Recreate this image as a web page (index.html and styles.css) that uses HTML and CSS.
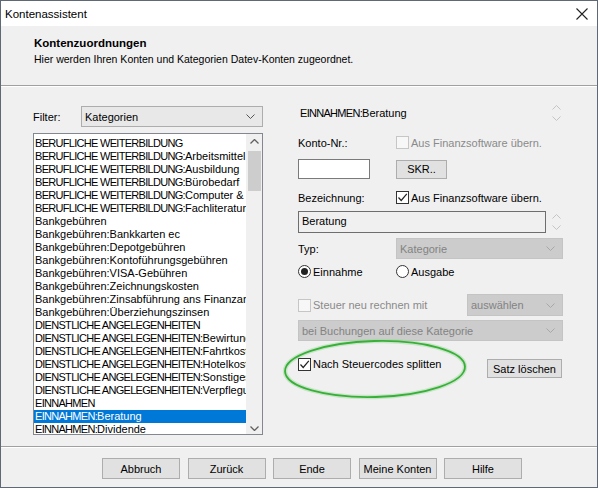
FILE: index.html
```html
<!DOCTYPE html>
<html lang="de">
<head>
<meta charset="utf-8">
<title>Kontenassistent</title>
<link rel="stylesheet" href="styles.css">
</head>
<body>
<div class="window">
  <div class="titlebar">
    <span class="title">Kontenassistent</span>
    <svg class="close" width="12" height="12" viewBox="0 0 12 12"><path d="M0.5 0.5 L11.5 11.5 M11.5 0.5 L0.5 11.5" stroke="#222" stroke-width="1.1" fill="none"/></svg>
  </div>
  <div class="header">
    <div class="h-title">Kontenzuordnungen</div>
    <div class="h-sub">Hier werden Ihren Konten und Kategorien Datev-Konten zugeordnet.</div>
  </div>
  <div class="main">
    <div class="left">
      <div class="filter-row">
        <span class="lbl">Filter:</span>
        <div class="combo filter-combo"><span>Kategorien</span><svg class="chev" width="9" height="5" viewBox="0 0 9 5"><path d="M0.5 0.5 L4.5 4.5 L8.5 0.5" stroke="#555" fill="none"/></svg></div>
      </div>
      <div class="listbox">
        <ul class="items">
          <li><span class="caps">BERUFLICHE WEITERBILDUNG</span></li>
          <li><span class="caps">BERUFLICHE WEITERBILDUNG:</span>Arbeitsmittel</li>
          <li><span class="caps">BERUFLICHE WEITERBILDUNG:</span>Ausbildung</li>
          <li><span class="caps">BERUFLICHE WEITERBILDUNG:</span>Bürobedarf</li>
          <li><span class="caps">BERUFLICHE WEITERBILDUNG:</span>Computer &amp; Software</li>
          <li><span class="caps">BERUFLICHE WEITERBILDUNG:</span>Fachliteratur</li>
          <li>Bankgebühren</li>
          <li>Bankgebühren:Bankkarten ec</li>
          <li>Bankgebühren:Depotgebühren</li>
          <li>Bankgebühren:Kontoführungsgebühren</li>
          <li>Bankgebühren:VISA-Gebühren</li>
          <li>Bankgebühren:Zeichnungskosten</li>
          <li>Bankgebühren:Zinsabführung ans Finanzamt</li>
          <li>Bankgebühren:Überziehungszinsen</li>
          <li><span class="caps">DIENSTLICHE ANGELEGENHEITEN</span></li>
          <li><span class="caps">DIENSTLICHE ANGELEGENHEITEN:</span>Bewirtung</li>
          <li><span class="caps">DIENSTLICHE ANGELEGENHEITEN:</span>Fahrtkosten</li>
          <li><span class="caps">DIENSTLICHE ANGELEGENHEITEN:</span>Hotelkosten</li>
          <li><span class="caps">DIENSTLICHE ANGELEGENHEITEN:</span>Sonstiges</li>
          <li><span class="caps">DIENSTLICHE ANGELEGENHEITEN:</span>Verpflegung</li>
          <li><span class="caps">EINNAHMEN</span></li>
          <li class="sel"><span class="caps">EINNAHMEN:</span>Beratung</li>
          <li><span class="caps">EINNAHMEN:</span>Dividende</li>
        </ul>
        <div class="vscroll">
          <svg class="sarrow" width="9" height="5" viewBox="0 0 9 5"><path d="M0.5 4.5 L4.5 0.5 L8.5 4.5" stroke="#606060" stroke-width="1.3" fill="none"/></svg>
          <div class="thumb"></div>
          <div class="track"></div>
          <svg class="sarrow" width="9" height="5" viewBox="0 0 9 5"><path d="M0.5 0.5 L4.5 4.5 L8.5 0.5" stroke="#606060" stroke-width="1.3" fill="none"/></svg>
        </div>
      </div>
    </div>
    <div class="right">
      <div class="row r-name">
        <span><span class="caps">EINNAHMEN:</span>Beratung</span>
        <svg class="spin" width="9" height="16" viewBox="0 0 9 16"><path d="M0.5 4.5 L4.5 0.5 L8.5 4.5 M0.5 11.5 L4.5 15.5 L8.5 11.5" stroke="#c4c4c4" fill="none"/></svg>
      </div>
      <div class="row r-konto">
        <span class="lbl col1">Konto-Nr.:</span>
        <span class="chk dis"></span><span class="dis-txt">Aus Finanzsoftware übern.</span>
      </div>
      <div class="row r-input">
        <div class="textin"></div>
        <div class="btn skr">SKR..</div>
      </div>
      <div class="row r-bez">
        <span class="lbl col1">Bezeichnung:</span>
        <span class="chk on"><svg width="11" height="11" viewBox="0 0 11 11"><path d="M1.5 5.5 L4.2 8.5 L9.8 1.8" stroke="#222" stroke-width="1.2" fill="none"/></svg></span><span>Aus Finanzsoftware übern.</span>
      </div>
      <div class="row r-text">
        <div class="textbox">Beratung</div>
        <svg class="spin" width="9" height="16" viewBox="0 0 9 16"><path d="M0.5 4.5 L4.5 0.5 L8.5 4.5 M0.5 11.5 L4.5 15.5 L8.5 11.5" stroke="#c4c4c4" fill="none"/></svg>
      </div>
      <div class="row r-typ">
        <span class="lbl col1">Typ:</span>
        <div class="combo dis typ-combo"><span>Kategorie</span><svg class="chev" width="9" height="5" viewBox="0 0 9 5"><path d="M0.5 0.5 L4.5 4.5 L8.5 0.5" stroke="#a8a8a8" fill="none"/></svg></div>
      </div>
      <div class="row r-radio">
        <span class="radio-wrap col1"><span class="radio on"></span><span>Einnahme</span></span>
        <span class="radio-wrap"><span class="radio"></span><span>Ausgabe</span></span>
      </div>
      <div class="row r-steuer">
        <span class="chk dis"></span><span class="dis-txt steuer-lbl">Steuer neu rechnen mit</span>
        <div class="combo dis ausw-combo"><span>auswählen</span><svg class="chev" width="9" height="5" viewBox="0 0 9 5"><path d="M0.5 0.5 L4.5 4.5 L8.5 0.5" stroke="#a8a8a8" fill="none"/></svg></div>
      </div>
      <div class="row r-buch">
        <div class="combo dis buch-combo"><span>bei Buchungen auf diese Kategorie</span><svg class="chev" width="9" height="5" viewBox="0 0 9 5"><path d="M0.5 0.5 L4.5 4.5 L8.5 0.5" stroke="#a8a8a8" fill="none"/></svg></div>
      </div>
      <div class="row r-split">
        <span class="chk on"><svg width="11" height="11" viewBox="0 0 11 11"><path d="M1.5 5.5 L4.2 8.5 L9.8 1.8" stroke="#222" stroke-width="1.2" fill="none"/></svg></span><span class="split-lbl">Nach Steuercodes splitten</span>
        <div class="btn satz">Satz löschen</div>
      </div>
    </div>
  </div>
  <div class="footer">
    <div class="btn fbtn">Abbruch</div>
    <div class="btn fbtn">Zurück</div>
    <div class="btn fbtn">Ende</div>
    <div class="btn fbtn">Meine Konten</div>
    <div class="btn fbtn">Hilfe</div>
  </div>
  <svg class="highlight" width="190" height="66" viewBox="0 0 190 66">
    <ellipse cx="95" cy="34" rx="90" ry="28" fill="none" stroke="#9ad89a" stroke-width="4.5" opacity="0.45" transform="rotate(-1.5 95 34)"/>
    <ellipse cx="95" cy="34" rx="90" ry="28" fill="none" stroke="#38b038" stroke-width="1.8" transform="rotate(-1.5 95 34)"/>
  </svg>
</div>
</body>
</html>
```

FILE: styles.css
```css
* { box-sizing: border-box; }
html, body { margin: 0; padding: 0; }
body {
  width: 598px;
  height: 488px;
  background: #f0f0f0;
  font-family: "Liberation Sans", Arial, sans-serif;
  font-size: 11px;
  color: #000;
  overflow: hidden;
}
.window {
  position: relative;
  width: 598px;
  height: 488px;
  border: 1px solid #5f6975;
  display: flex;
  flex-direction: column;
  background: #f0f0f0;
}
.titlebar {
  height: 25px;
  flex: none;
  background: #fff;
  display: flex;
  align-items: center;
  justify-content: space-between;
  padding: 0 9px 0 4px;
}
.title { font-size: 11.5px; color: #000; }
.header {
  height: 60px;
  flex: none;
  border-bottom: 1px solid #a0a0a0;
  box-shadow: 0 1px 0 #fff;
  padding: 9px 0 0 33px;
}
.h-title { font-weight: bold; font-size: 11.5px; line-height: 16px; }
.h-sub { line-height: 16px; font-size: 10.5px; }
.caps { letter-spacing: -0.7px; }
.main {
  flex: 1;
  display: flex;
  padding: 20px 0 0 32px;
  border-bottom: 1px solid #a0a0a0;
  box-shadow: 0 1px 0 #fff;
}
.left {
  width: 230px;
  display: flex;
  flex-direction: column;
}
.filter-row {
  display: flex;
  align-items: center;
  height: 21px;
}
.filter-row .lbl { width: 48px; }
.combo {
  height: 21px;
  border: 1px solid #adadad;
  background: #e8e8e8;
  display: flex;
  align-items: center;
  justify-content: space-between;
  padding: 0 7px 0 3px;
}
.filter-combo { flex: 1; }
.combo.dis {
  background: #cccccc;
  border-color: #c4c4c4;
  color: #838383;
}
.listbox {
  margin-top: 6px;
  height: 302px;
  border: 1px solid #828790;
  background: #fff;
  display: flex;
}
.items {
  list-style: none;
  margin: 0;
  padding: 3px 0 0 0;
  flex: 1;
  overflow: hidden;
}
.items li {
  height: 13px;
  line-height: 13px;
  padding-left: 1px;
  white-space: nowrap;
  overflow: hidden;
}
.items li.sel { background: #0078d7; color: #fff; }
.vscroll {
  width: 16px;
  background: #f0f0f0;
  display: flex;
  flex-direction: column;
  align-items: center;
  padding: 5px 0 3px 1px;
}
.sarrow { flex: none; }
.thumb {
  margin-top: 7px;
  width: 13px;
  height: 40px;
  background: #cdcdcd;
}
.track { flex: 1; }
.right {
  margin-left: 35px;
  width: 265px;
  display: flex;
  flex-direction: column;
}
.row { display: flex; align-items: center; flex: none; }
.col1 { width: 98px; flex: none; }
.r-name { height: 14px; justify-content: space-between; padding-left: 2px; }
.spin { margin-right: 2px; }
.r-konto { margin-top: 16px; height: 13px; }
.chk {
  width: 13px;
  height: 13px;
  border: 1px solid #333;
  background: #fff;
  display: inline-flex;
  align-items: center;
  justify-content: center;
  margin-right: 2px;
  flex: none;
}
.chk.dis { border-color: #c6c6c6; background: #f7f7f7; }
.dis-txt { color: #8a8a8a; }
.r-input { margin-top: 10px; height: 20px; }
.textin {
  width: 72px;
  height: 20px;
  background: #fff;
  border: 1px solid #7a7a7a;
  margin-right: 26px;
}
.btn {
  background: #e1e1e1;
  border: 1px solid #adadad;
  display: flex;
  align-items: center;
  justify-content: center;
}
.skr { width: 51px; height: 19px; }
.r-bez { margin-top: 12px; height: 13px; }
.r-text { margin-top: 7px; height: 22px; justify-content: space-between; }
.textbox {
  width: 248px;
  height: 22px;
  border: 1px solid #6e6e6e;
  background: #f0f0f0;
  padding-left: 3px;
  line-height: 18px;
}
.r-typ { margin-top: 5px; height: 21px; }
.typ-combo { width: 167px; }
.r-radio { margin-top: 6px; height: 13px; }
.radio-wrap { display: flex; align-items: center; }
.radio {
  width: 13px;
  height: 13px;
  border: 1px solid #333;
  border-radius: 50%;
  background: #fff;
  margin-right: 2px;
  display: inline-flex;
  align-items: center;
  justify-content: center;
}
.radio.on::after {
  content: "";
  width: 7px;
  height: 7px;
  border-radius: 50%;
  background: #222;
}
.r-steuer { margin-top: 16px; height: 22px; }
.steuer-lbl { width: 154px; }
.ausw-combo { width: 96px; height: 22px; }
.r-buch { margin-top: 4px; height: 21px; }
.buch-combo { width: 265px; }
.r-split { margin-top: 17px; height: 20px; align-items: flex-start; }
.split-lbl { width: 174px; line-height: 13px; }
.satz { width: 75px; height: 19px; margin-top: 1px; }
.footer {
  flex: none;
  height: 40px;
  display: flex;
  gap: 7.5px;
  padding: 11px 0 0 101px;
}
.fbtn { width: 78px; height: 21px; }
.highlight {
  position: absolute;
  left: 279px;
  top: 334px;
}
```
